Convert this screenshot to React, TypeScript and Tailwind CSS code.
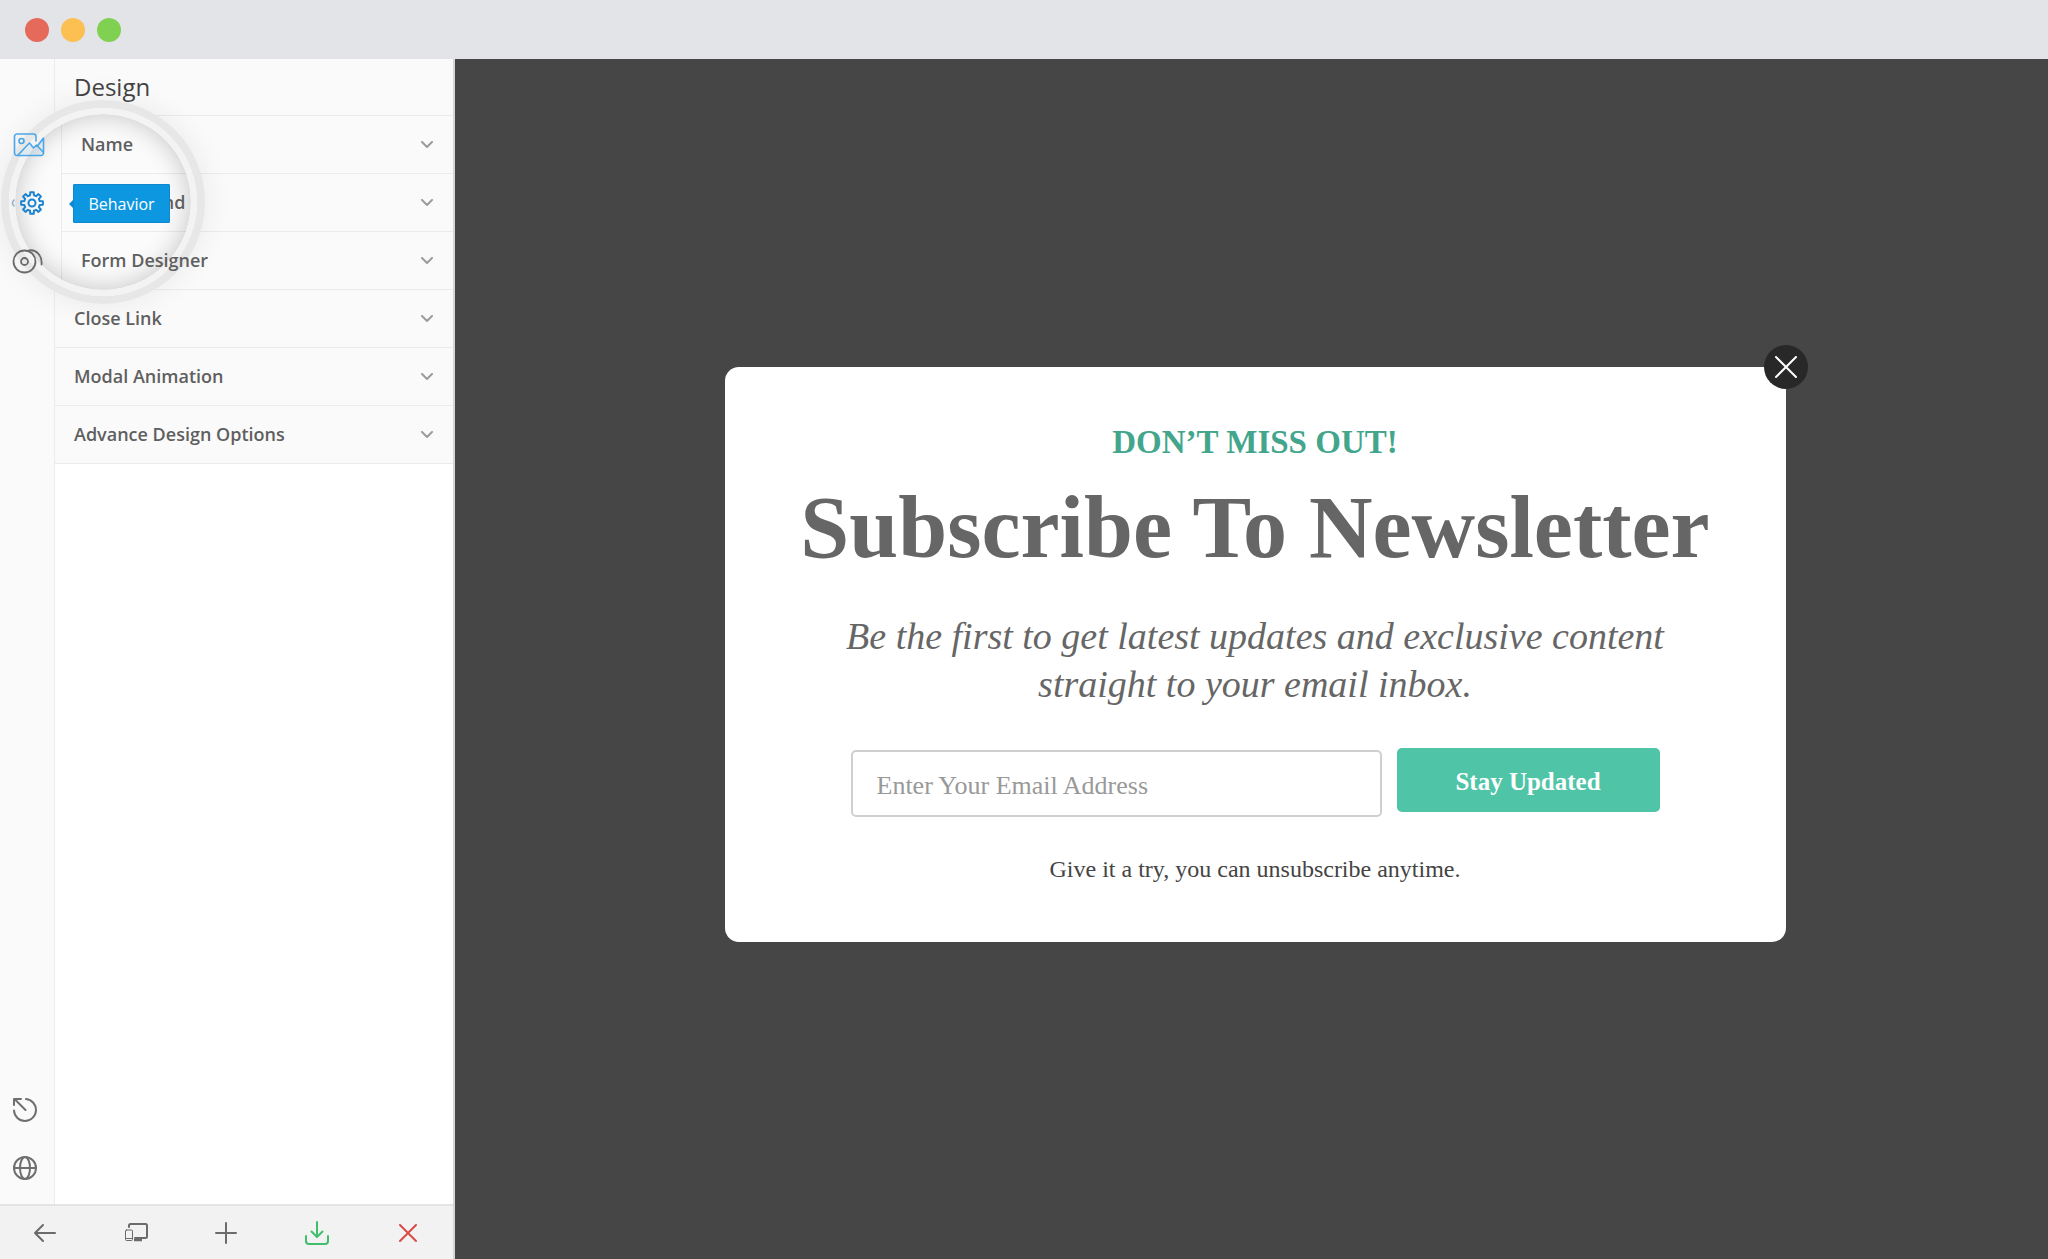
import React from 'react';

const windowDots = ['bg-[#e66a5b]', 'bg-[#fcbf52]', 'bg-[#80d152]'];

const sections = [
  { label: 'Name', magnified: true },
  { label: 'Background', magnified: true },
  { label: 'Form Designer', magnified: true },
  { label: 'Close Link', magnified: false },
  { label: 'Modal Animation', magnified: false },
  { label: 'Advance Design Options', magnified: false }
];

const gearPath = (() => {
  const points: string[] = [];
  const ring = [
    [-14, 8],
    [-9, 11],
    [9, 11],
    [14, 8]
  ];
  for (let tooth = 0; tooth < 8; tooth++) {
    ring.forEach(([offset, radius]) => {
      const angle = ((tooth * 45 + offset) * Math.PI) / 180;
      points.push(`${(13 + radius * Math.cos(angle)).toFixed(2)} ${(13 + radius * Math.sin(angle)).toFixed(2)}`);
    });
  }
  return `M${points.join('L')}Z`;
})();

interface IconProps {
  className?: string;
  width?: number;
  height?: number;
  strokeWidth?: number;
  children: React.ReactNode;
}

const Icon: React.FC<IconProps> = ({ className, width = 24, height = 24, strokeWidth = 2, children }) => (
  <svg
    className={className}
    width={width}
    height={height}
    viewBox={`0 0 ${width} ${height}`}
    fill="none"
    stroke="currentColor"
    strokeWidth={strokeWidth}
    strokeLinecap="round"
    strokeLinejoin="round"
    aria-hidden="true"
  >
    {children}
  </svg>
);

const DesignIcon = () => (
  <Icon width={32} height={26} strokeWidth={1.6}>
    <path d="M23 9V4.500a2.500 2.500 0 0 0-2.500-2.500H4a2.500 2.500 0 0 0-2.500 2.500V21A2.500 2.500 0 0 0 4 23.500h24a2.500 2.500 0 0 0 2.500-2.500V6l-6 8" />
    <circle cx="8.500" cy="9" r="2.500" />
    <path d="M5 23l11.500-12 4 5 3-3 6.500 7" />
    <path d="M7 22l10-9 4 5 3-3 5 6v2z" fill="currentColor" fillOpacity="0.12" stroke="none" />
  </Icon>
);

const BehaviorIcon = () => (
  <Icon width={26} height={26}>
    <path d={gearPath} />
    <circle cx="13" cy="13" r="3.500" />
  </Icon>
);

const LaunchIcon = () => (
  <Icon width={32} height={26} strokeWidth={1.8}>
    <circle cx="12.500" cy="13.500" r="11" />
    <circle cx="12.500" cy="13.500" r="3.500" />
    <path d="M17 2.500c7-1.500 13.500 5 12.500 14" />
  </Icon>
);

const Rail = () => (
  <nav className="flex w-[55px] shrink-0 flex-col border-r border-[#ececec] bg-[#fafafa] pt-[57px] pb-[7px]">
    <button aria-label="Design" className="relative z-20 flex h-[58px] items-center pl-[13px] text-[#4ba6e8]">
      <DesignIcon />
    </button>
    <button aria-label="Behavior" className="relative z-20 flex h-[58px] items-center justify-end pr-[9px] text-[#1c83d0]">
      <Icon className="mr-1 text-[#8fb0cf]" width={4} height={8} strokeWidth={1.5}>
        <path d="M3 1Q0 4 3 7" />
      </Icon>
      <BehaviorIcon />
    </button>
    <button aria-label="Launch" className="relative z-20 flex h-[58px] items-center pl-[12px] text-[#6b6b6b]">
      <LaunchIcon />
    </button>
    <div className="flex-1" />
    <button aria-label="Reset" className="flex h-[58px] items-center pl-[13px] text-[#6f6f6f]">
      <Icon>
        <path d="M13 1a11 11 0 1 1-12 11.500M12.500 12L2 1.500M1 7V1h7" />
      </Icon>
    </button>
    <button aria-label="Language" className="flex h-[58px] items-center pl-[13px] text-[#6f6f6f]">
      <Icon>
        <circle cx="12" cy="12" r="11" />
        <ellipse cx="12" cy="12" rx="5" ry="11" />
        <path d="M1 12h22" />
      </Icon>
    </button>
  </nav>
);

const SectionList = () => (
  <div className="min-w-0 flex-1 bg-white">
    <h1 className="flex h-[57px] items-center border-b border-[#ebebeb] bg-[#fafafa] pl-[19px] text-2xl text-[#444]">
      Design
    </h1>
    {sections.map(({ label, magnified }) => (
      <button
        key={label}
        className={`flex h-[58px] w-full items-center justify-between border-b border-[#ebebeb] bg-[#fafafa] pr-[19px] text-left text-[18px] font-semibold text-[#5f5f5f] ${magnified ? 'pl-[26px]' : 'pl-[19px]'}`}
      >
        <span className="relative z-20">{label}</span>
        <Icon className="text-[#9c9c9c]" width={14} height={8}>
          <path d="M2 1l5 5 5-5" />
        </Icon>
      </button>
    ))}
  </div>
);

/* Magnifying lens with the tooltip of the highlighted rail item */
const Lens = () => (
  <>
    <div className="pointer-events-none absolute top-[41px] left-px z-10 size-[204px] rounded-full border-8 border-[#e7e7e7] shadow-[0_0_30px_rgba(0,0,0,0.07)]">
      <div className="size-full rounded-full border-[6px] border-[#f3f3f3]">
        <div className="relative flex size-full overflow-hidden rounded-full bg-[#fbfbfb]">
          <div className="w-[47px] border-r border-[#ececec]" />
          <div className="flex flex-1 flex-col pt-px">
            <div className="h-[59px] border-b border-[#ebebeb]" />
            <div className="h-[58px] border-b border-[#ebebeb]" />
          </div>
          <div className="absolute inset-0 rounded-full shadow-[inset_0_0_26px_rgba(0,0,0,0.22)]" />
        </div>
      </div>
    </div>
    <div role="tooltip" className="absolute top-[125px] left-[69px] z-30 flex items-center">
      <div className="border-y-4 border-r-4 border-y-transparent border-r-[#0f88cf]" />
      <div className="flex h-[39px] w-[97px] items-center justify-center rounded-[1px] border border-[#0f88cf] bg-[#0d97e0] text-base text-white">
        Behavior
      </div>
    </div>
  </>
);

const ActionBar = () => (
  <div className="grid h-[55px] shrink-0 grid-cols-5 border-t-2 border-[#e4e4e4] bg-[#f2f2f2] text-[#6b6b6b]">
    <button aria-label="Back" className="flex items-center justify-center">
      <Icon>
        <path d="M22 12H2M10 4l-8 8 8 8" />
      </Icon>
    </button>
    <button aria-label="Responsive preview" className="flex items-center justify-center">
      <Icon>
        <path d="M5 6V4.500A1.500 1.500 0 0 1 6.500 3h15A1.500 1.500 0 0 1 23 4.500v11a1.500 1.500 0 0 1-1.500 1.500H11" />
        <path d="M10 19h8M14.500 17v2" strokeWidth="2.500" strokeLinecap="butt" />
        <rect x="1.500" y="9" width="7" height="10.500" rx="1" strokeWidth="1" />
        <path d="M2 17.500h6" strokeWidth="1" />
      </Icon>
    </button>
    <button aria-label="Add" className="flex items-center justify-center">
      <Icon>
        <path d="M12 2v20M2 12h20" />
      </Icon>
    </button>
    <button aria-label="Save" className="flex items-center justify-center text-[#40bf6b]">
      <Icon>
        <path d="M12 1v15M6.500 10.500L12 16l5.500-5.500M1 15v5a3 3 0 0 0 3 3h16a3 3 0 0 0 3-3v-5" />
      </Icon>
    </button>
    <button aria-label="Close editor" className="flex items-center justify-center text-[#d84b47]">
      <Icon width={18} height={18}>
        <path d="M1 1l16 16M17 1L1 17" />
      </Icon>
    </button>
  </div>
);

const Sidebar = () => (
  <aside className="relative flex w-[455px] shrink-0 flex-col border-r-2 border-[#d6d6d6] font-['Open_Sans',sans-serif]">
    <div className="flex min-h-0 flex-1">
      <Rail />
      <SectionList />
    </div>
    <ActionBar />
    <Lens />
  </aside>
);

const NewsletterModal = () => (
  <section className="relative w-[1061px] rounded-[14px] bg-white px-12 pt-[55px] pb-[57px] text-center font-['Palatino_Linotype','Liberation_Serif',serif]">
    <button
      aria-label="Close"
      className="absolute -top-[22px] -right-[22px] flex size-11 items-center justify-center rounded-full bg-[#282828] text-white"
    >
      <Icon width={22} height={22}>
        <path d="M1 1l20 20M21 1L1 21" />
      </Icon>
    </button>
    <p className="text-[33px] leading-10 font-bold text-[#43a68c]">DON’T MISS OUT!</p>
    <h2 className="mt-[22px] text-[88px] leading-[88px] font-bold whitespace-nowrap text-[#666]">
      Subscribe To Newsletter
    </h2>
    <p className="mt-10 text-[38px] leading-[48px] text-[#666] italic">
      Be the first to get latest updates and exclusive content
      <br />
      straight to your email inbox.
    </p>
    <form className="mt-10 flex items-start gap-[15px] px-[78px]" onSubmit={(e) => e.preventDefault()}>
      <input
        type="email"
        aria-label="Email address"
        placeholder="Enter Your Email Address"
        className="mt-[2px] h-[67px] min-w-0 flex-1 rounded-[5px] border-2 border-[#cfcfcf] px-6 pt-1 text-[26px] text-[#666] placeholder:text-[#999]"
      />
      <button type="submit" className="h-16 w-[263px] rounded-[5px] bg-[#50c4a6] pt-1 text-[25px] font-bold text-white">
        Stay Updated
      </button>
    </form>
    <p className="mt-9 text-2xl leading-8 text-[#444]">Give it a try, you can unsubscribe anytime.</p>
  </section>
);

export default function App() {
  return (
    <div className="flex h-screen flex-col">
      <header className="flex h-[59px] shrink-0 items-center gap-3 bg-[#e2e4e8] pl-[25px]">
        {windowDots.map((color) => (
          <span key={color} className={`size-6 rounded-full ${color}`} />
        ))}
      </header>
      <div className="flex min-h-0 flex-1">
        <Sidebar />
        <main className="flex flex-1 items-center justify-center bg-[#464646] pb-[9px] pl-[7px]">
          <NewsletterModal />
        </main>
      </div>
    </div>
  );
}
